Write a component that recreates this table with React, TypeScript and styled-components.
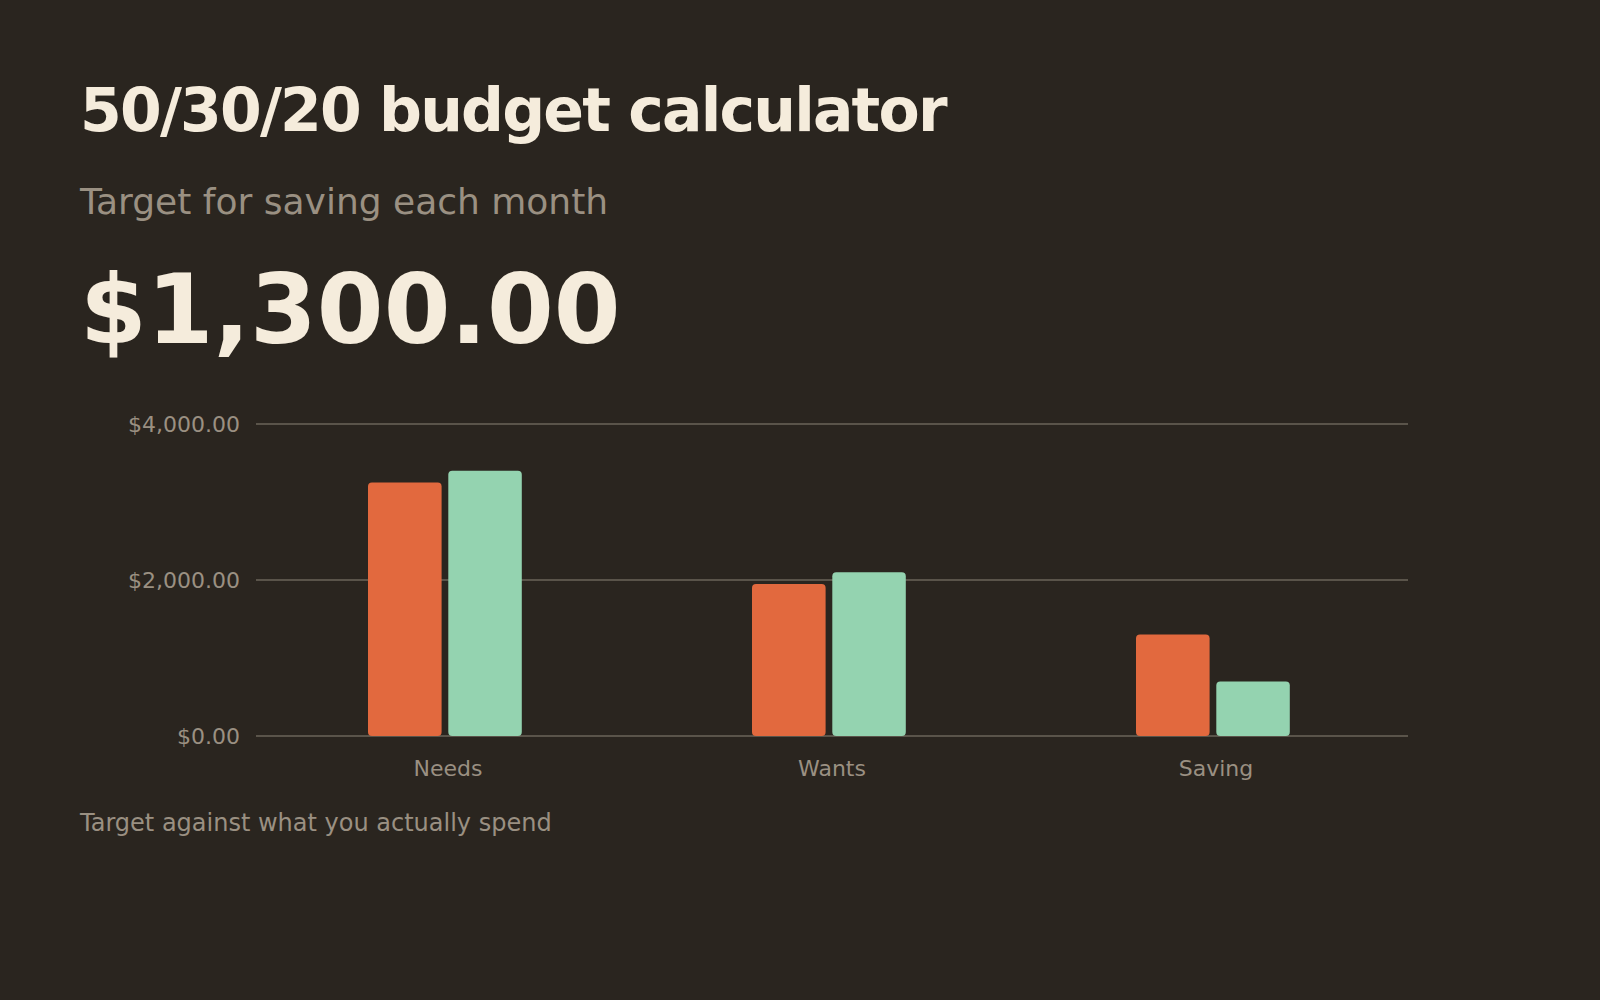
import React from "react";
import styled, { createGlobalStyle } from "styled-components";

const GlobalStyle = createGlobalStyle`
  html, body {
    margin: 0;
    padding: 0;
    background: #2a251f;
  }
  body {
    font-family: "DejaVu Sans", "Noto Sans", sans-serif;
    color: #f5ecdc;
  }
`;

const Page = styled.main`
  box-sizing: border-box;
  width: 1600px;
  min-height: 1000px;
  padding: 80px 80px 0;
  background: #2a251f;
  display: flex;
  flex-direction: column;
`;

const Title = styled.h1`
  margin: 0;
  font-size: 60px;
  line-height: 1;
  font-weight: 700;
  letter-spacing: -1.8px;
  color: #f5ecdc;
`;

const Subtitle = styled.p`
  margin: 40px 0 0;
  font-size: 36px;
  line-height: 1.2;
  font-weight: 400;
  color: #9a9082;
`;

const Amount = styled.div`
  margin-top: 39px;
  font-size: 96px;
  line-height: 1;
  font-weight: 700;
  color: #f5ecdc;
`;

const ChartSvg = styled.svg`
  display: block;
  margin-top: 31.8px;
  overflow: visible;
`;

const GridLine = styled.line`
  stroke: #6b645a;
  stroke-width: 1.5;
`;

const AxisLabel = styled.text`
  font-family: "DejaVu Sans", sans-serif;
  font-size: 22px;
  fill: #9a9082;
  text-anchor: end;
`;

const CategoryLabel = styled.text`
  font-family: "DejaVu Sans", sans-serif;
  font-size: 22px;
  fill: #9a9082;
  text-anchor: middle;
`;

const Bar = styled.rect<{ $kind: "target" | "actual" }>`
  fill: ${(p) => (p.$kind === "target" ? "#e2693e" : "#94d3b0")};
`;

const Caption = styled.p`
  margin: 19.5px 0 0;
  font-size: 24px;
  line-height: 1.2;
  color: #9a9082;
`;

const data = [
  { name: "Needs", target: 3250, actual: 3400 },
  { name: "Wants", target: 1950, actual: 2100 },
  { name: "Saving", target: 1300, actual: 700 },
];

const ticks = [4000, 2000, 0];

const PLOT_LEFT = 176;
const PLOT_RIGHT = 1328;
const BASE_Y = 346;
const TOP_Y = 34;
const MAX = 4000;
const BAND = (PLOT_RIGHT - PLOT_LEFT) / data.length;

const yFor = (v: number) => BASE_Y - ((BASE_Y - TOP_Y) * v) / MAX;
const money = (v: number) =>
  "$" +
  v.toLocaleString("en-US", { minimumFractionDigits: 2, maximumFractionDigits: 2 });

function Chart() {
  return (
    <ChartSvg width={1440} height={400} viewBox="0 0 1440 400">
      {ticks.map((t) => (
        <g key={t}>
          <GridLine x1={PLOT_LEFT} x2={PLOT_RIGHT} y1={yFor(t)} y2={yFor(t)} />
          <AxisLabel x={160} y={yFor(t) + 8}>
            {money(t)}
          </AxisLabel>
        </g>
      ))}
      {data.map((d, i) => {
        const c = PLOT_LEFT + BAND * i + BAND / 2;
        return (
          <g key={d.name}>
            <Bar
              $kind="target"
              x={c - 80}
              y={yFor(d.target)}
              width={73.6}
              height={BASE_Y - yFor(d.target)}
              rx={4}
            />
            <Bar
              $kind="actual"
              x={c + 0.3}
              y={yFor(d.actual)}
              width={73.5}
              height={BASE_Y - yFor(d.actual)}
              rx={4}
            />
            <CategoryLabel x={c} y={386}>
              {d.name}
            </CategoryLabel>
          </g>
        );
      })}
    </ChartSvg>
  );
}

export default function App() {
  return (
    <>
      <GlobalStyle />
      <Page>
        <Title>50/30/20 budget calculator</Title>
        <Subtitle>Target for saving each month</Subtitle>
        <Amount>$1,300.00</Amount>
        <Chart />
        <Caption>Target against what you actually spend</Caption>
      </Page>
    </>
  );
}
